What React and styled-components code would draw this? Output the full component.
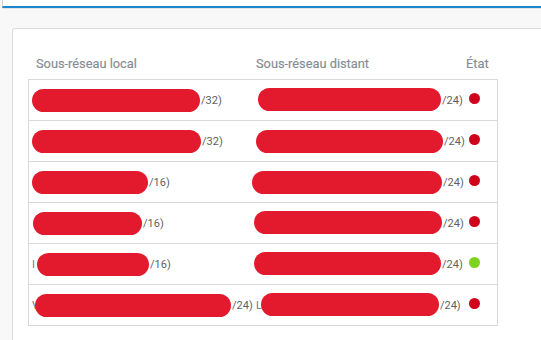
import React from "react";
import styled, { createGlobalStyle } from "styled-components";

const Global = createGlobalStyle`
  html, body { margin: 0; padding: 0; background: #f8f8f8; }
  body { font-family: Roboto, "Liberation Sans", sans-serif; }
`;

const Page = styled.div`
  width: 541px;
  height: 340px;
  overflow: hidden;
  background: #f8f8f8;
  display: flex;
  flex-direction: column;
`;

const TopPanel = styled.div`
  margin-left: 2px;
  height: 6px;
  background: #fff;
  border-left: 1px solid #d4d4d4;
  border-bottom: 2px solid #1a87d0;
  box-shadow: 0 1px 0 #e4e4e4;
  flex: none;
`;

const Body = styled.div`
  padding: 20px 0 0 12px;
  flex: 1;
  display: flex;
`;

const Card = styled.div`
  flex: 1;
  margin: 0 -20px -20px 0;
  background: #fff;
  border: 1px solid #dcdcdc;
  border-radius: 3px;
  padding: 18px 0 0 15px;
`;

const Table = styled.div`
  width: 470px;
  display: grid;
  grid-template-columns: 222px 210px 1fr;
`;

const HeadCell = styled.div`
  height: 32px;
  display: flex;
  align-items: center;
  padding-left: ${(p) => p.$pad}px;
  font-size: 12.8px;
  color: #838c95;
  -webkit-text-stroke: 0.15px #838c95;
`;

const Cell = styled.div`
  height: 40px;
  display: flex;
  align-items: center;
  padding-left: ${(p) => p.$pad}px;
  border-top: 1px solid #d9d9d9;
  ${(p) => p.$first && "border-left: 1px solid #d9d9d9;"}
  ${(p) => p.$last && "border-right: 1px solid #d9d9d9;"}
  ${(p) => p.$bottom && "border-bottom: 1px solid #d9d9d9;"}
  font-size: 11px;
  color: #666;
  white-space: nowrap;
`;

const Redact = styled.span`
  display: inline-block;
  flex: none;
  width: ${(p) => p.$w}px;
  height: 23px;
  margin-left: ${(p) => p.$off}px;
  margin-top: ${(p) => p.$dy}px;
  border-radius: 12px;
  background: #e31a2e;
`;

const Suffix = styled.span`
  margin-left: 1px;
  color: #5f5f5f;
`;

const Lead = styled.span`
  color: #777;
`;

const Dot = styled.span`
  width: 11px;
  height: 11px;
  border-radius: 50%;
  margin-top: -4px;
  background: ${(p) => (p.$ok ? "#7ed321" : "#d0021b")};
`;

const rows = [
  { l: { off: 0, w: 168, dy: 0, s: "/32)" }, d: { off: 5, w: 183, dy: -2, s: "/24)" }, ok: false },
  { l: { off: 0, w: 169, dy: 1, s: "/32)" }, d: { off: 3, w: 187, dy: 0, s: "/24)" }, ok: false },
  { l: { off: 0, w: 116, dy: 1, s: "/16)" }, d: { off: -1, w: 190, dy: 1, s: "/24)" }, ok: false },
  { l: { off: 1, w: 109, dy: 1, s: "/16)" }, d: { off: 1, w: 188, dy: -2, s: "/24)" }, ok: false },
  { l: { off: 2, w: 112, dy: 0, s: "/16)", lead: "I" }, d: { off: 1, w: 187, dy: -1, s: "/24)" }, ok: true },
  { l: { off: -4, w: 196, dy: 0, s: "/24)", lead: "V" }, d: { off: -1, w: 178, dy: -1, s: "/24)", lead: "L" }, ok: false },
];

function SubnetCell({ data, pad, first, bottom }) {
  return (
    <Cell $pad={pad} $first={first} $bottom={bottom}>
      {data.lead && <Lead>{data.lead}</Lead>}
      <Redact $w={data.w} $off={data.off} $dy={data.dy} />
      <Suffix>{data.s}</Suffix>
    </Cell>
  );
}

export default function App() {
  return (
    <>
      <Global />
      <Page>
        <TopPanel />
        <Body>
          <Card>
            <Table>
              <HeadCell $pad={8}>Sous-réseau local</HeadCell>
              <HeadCell $pad={6}>Sous-réseau distant</HeadCell>
              <HeadCell $pad={6}>État</HeadCell>
              {rows.map((r, i) => {
                const bottom = i === rows.length - 1;
                return (
                  <React.Fragment key={i}>
                    <SubnetCell data={r.l} pad={3} first bottom={bottom} />
                    <SubnetCell data={r.d} pad={bottom ? 6 : 3} bottom={bottom} />
                    <Cell $pad={9} $last $bottom={bottom}>
                      <Dot $ok={r.ok} />
                    </Cell>
                  </React.Fragment>
                );
              })}
            </Table>
          </Card>
        </Body>
      </Page>
    </>
  );
}
